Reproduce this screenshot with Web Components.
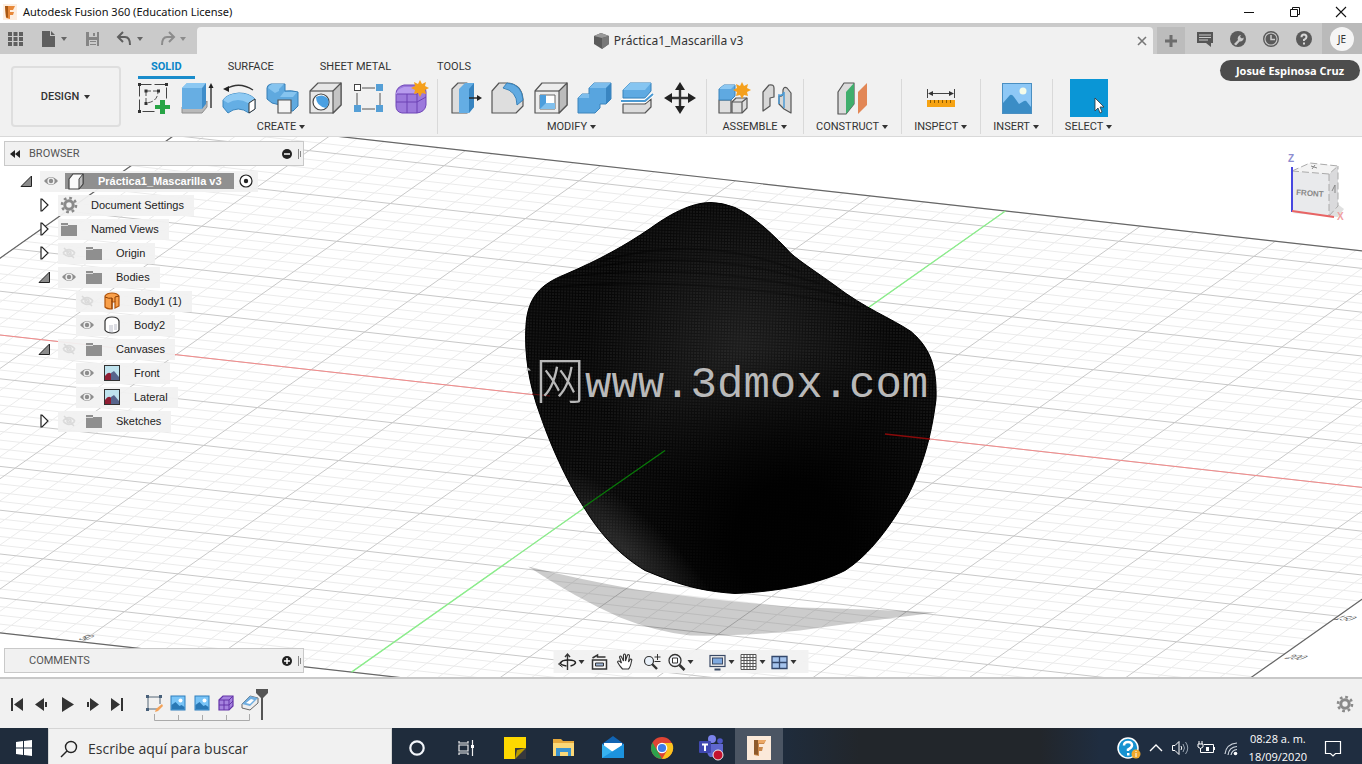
<!DOCTYPE html>
<html lang="es">
<head>
<meta charset="utf-8">
<title>Autodesk Fusion 360 (Education License)</title>
<style>
html, body {
	margin: 0;
	height: 100%;
}
body {
	font: 11px/14px Roboto, "Liberation Sans", sans-serif;
	color: #333;
	background: #fff;
	overflow: hidden;
}
</style>
</head>
<body>
<fx-app></fx-app>

<script>
// every icon is [box size, markup]
const box = 'stroke="#555" stroke-width="1.2" stroke-linejoin="round"';
const eye = '<path d="M1 8Q8 0 15 8Q8 16 1 8z" fill="#8d8d8d"/><circle cx="8" cy="8" r="3.6" fill="#f1f1f1"/><circle cx="8" cy="8" r="2.2" fill="#8d8d8d"/>';
const picture = '<rect x="1" y="1" width="14" height="14" fill="#79c4f7" stroke="#2f7fbd"/><path d="M1.500 10l4-3 4 4 2-1 3 2v2.500h-13z" fill="#2a78b5"/><circle cx="10.500" cy="5.500" r="2" fill="#fff"/>';
const gear = '<g fill="none" stroke="#8a8a8a"><circle cx="9" cy="9" r="4.200" stroke-width="3"/><circle cx="9" cy="9" r="7" stroke-width="2.600" stroke-dasharray="2.700 2.800"/></g>';
const fusion = '<rect width="24" height="24" fill="#fbe9d9"/><path d="M7 4h12l-2 4h-5v3h4l-1 4h-3v5l-5-1z" fill="#c9884c"/><path d="M7 4h4v15l-4-1z" fill="#8d5a2c"/><path d="M11 4h8l-2 3h-6z" fill="#eba765"/>';

const icons = {
	caret: [8, '<path d="M1 2h6L4 6z" fill="currentColor"/>'],
	logo: [16, '<rect x="1" y="0" width="14" height="16" fill="#fdeee0"/><path d="M3 2h10l-2 4H8v2h4l-1 3H8v4l-4-1z" fill="#e8893a"/><path d="M3 2h3v12l-2-1z" fill="#a85814"/>'],
	minimize: [16, '<path d="M3 8.500h10" stroke="#111"/>'],
	restore: [16, '<path d="M3.500 5.500h7v7h-7zM5.500 5.500v-2h7v7h-2" fill="none" stroke="#111"/>'],
	close: [16, '<path d="M3 3l10 10M13 3L3 13" stroke="#111" fill="none" stroke-width="1.100"/>'],
	apps: [16, '<path d="M0 1h4v4H0zM5.500 1h4v4h-4zM11 1h4v4h-4zM0 6h4v4H0zM5.500 6h4v4h-4zM11 6h4v4h-4zM0 11h4v4H0zM5.500 11h4v4h-4zM11 11h4v4h-4z" fill="#5f5f5f"/>'],
	file: [16, '<path d="M1 0h8v5h5v11H1z" fill="#5f5f5f"/><path d="M10 0l4 4h-4z" fill="#5f5f5f"/>'],
	save: [16, '<path d="M1 1h13v14H1z" fill="#858585"/><path d="M4 1h8v5H4zM4 9h8v6H4z" fill="#cacaca"/><path d="M8 2h2v3H8zM5 10h6v1H5zM5 13h6v1H5z" fill="#858585"/>'],
	undo: [16, '<path d="M6 1L1 6l5 5M2 6h6q5 0 5 8" fill="none" stroke="#5f5f5f" stroke-width="2"/>'],
	redo: [16, '<path d="M10 1l5 5-5 5M14 6H8q-5 0-5 8" fill="none" stroke="#8c8c8c" stroke-width="2"/>'],
	doc: [16, '<path d="M0 3l7-3 8 3v8l-7 5-8-5z" fill="#5b5b5b"/><path d="M0 3l7-3 8 3-7 2z" fill="#999"/><path d="M8 5l7-2v8l-7 5z" fill="#777"/>'],
	tabclose: [12, '<path d="M2 2l8 8M10 2l-8 8" stroke="#777" stroke-width="1.600"/>'],
	plus: [14, '<path d="M7 1v12M1 7h12" stroke="#6d6d6d" stroke-width="3"/>'],
	chat: [16, '<path d="M0 1h16v11h-2v4l-5-4H0z" fill="#555"/><path d="M2 4h12M2 6.500h12M2 9h9" stroke="#cacaca" stroke-width="1.200"/>'],
	wrench: [16, '<circle cx="8" cy="8" r="8" fill="#5a5a5a"/><path d="M4 13l4-4a3.500 3.500 0 0 1 3-5l-1 2 2 1.500 1.600-1a3.500 3.500 0 0 1-4 4L6 14.500z" fill="#cacaca"/>'],
	clock: [16, '<circle cx="8" cy="8" r="7.300" fill="none" stroke="#5a5a5a" stroke-width="1.400"/><circle cx="8" cy="8" r="5.500" fill="#5a5a5a"/><path d="M8 4v4.500h4" stroke="#cacaca" fill="none" stroke-width="1.500"/>'],
	help: [16, '<circle cx="8" cy="8" r="8" fill="#5a5a5a"/><path d="M5.500 6.200Q5.500 3.500 8 3.500t2.500 2.500Q10.500 7.500 8 8.800V10" stroke="#d8d8d8" stroke-width="2" fill="none"/><rect x="7" y="11.500" width="2" height="2" fill="#d8d8d8"/>'],

	// ribbon
	sketch: [36, '<path d="M4.500 4.500h27v14M4.500 4.500v27h16" fill="none" stroke="#444" stroke-dasharray="12 3"/><path d="M11 11h12M11 11v12Q23 22 23 11" fill="none" stroke="#555" stroke-dasharray="5 2"/><path d="M3 3h3v3H3zM30 3h3v3h-3zM3 30h3v3H3zM9.500 9.500h3v3h-3zM22 9.500h3v3h-3zM9.500 22h3v3h-3z" fill="#333"/><path d="M25 20h5v5h5v4h-5v5h-5v-5h-5v-4h5z" fill="#27a445"/>'],
	extrude: [36, '<path d="M4 27h20l5-6v6l-5 6H4z" fill="#b9b9b9" stroke="#8e8e8e"/><path d="M4 8l5-5h19l-4 5v21H4z" fill="#67aee3"/><path d="M4 8l5-5h19l-4 5z" fill="#8cc8f2"/><path d="M24 8l4-5v21l-4 5z" fill="#3f8dca"/><path d="M33 7v21" stroke="#222" stroke-width="1.300"/><path d="M33 3l2.500 5h-5z" fill="#222"/>'],
	revolve: [36, '<path d="M5 9q13-8 27 1" fill="none" stroke="#333" stroke-width="1.400"/><path d="M2 9l6-3v6z" fill="#222"/><path d="M2 20q4-6 16-7 10 0 16 6v10l-6 4q-11-8-21 0l-5-6z" fill="#64aee4" stroke="#3a85bd"/><path d="M2 20q4-6 16-7 10 0 16 6l-7 4q-10-6-20 0z" fill="#8fcaf3"/><path d="M28 23l6-4v10l-6 4z" fill="#fff" stroke="#333"/>'],
	sweep: [36, '<path d="M3 8q0-3 4-4h14v7q6-1 13 1v14l-5 5H17l-1-6-8-2-5-4z" fill="#5fa9df" stroke="#377fb6"/><path d="M4 8q1-3 4-4h12l-5 5v2l-4 2zM16 17l4-5h13l-4 5z" fill="#86c4ef"/><path d="M14 20h13v13H14z" fill="#f4f4f4" stroke="#555" stroke-width="1.200"/>'],
	hole: [36, `<path d="M3 11l8-8h23v22l-8 8H3z" fill="#e7e7e7" ${box}/><path d="M26 11l8-8v22l-8 8z" fill="#c4c4c4" ${box}/><path d="M3 11h23" ${box}/><circle cx="14" cy="22" r="8" fill="#fff" stroke="#444" stroke-width="1.200"/><path d="M9 17q0 9 10 11 4-4 2-9-5-6-12-2z" fill="#4aa0e2"/>`],
	pattern: [36, '<path d="M12 8h13M7 13v12M12 29h13M30 13v12" stroke="#555" stroke-dasharray="20"/><rect x="4.500" y="4.500" width="6" height="6" fill="#fff" stroke="#444"/><path d="M26 4h7v7h-7zM4 25h7v7H4zM26 25h7v7h-7z" fill="#559fd6"/>'],
	form: [36, '<path d="M3 14q0-7 8-9h14q8 0 8 7v13q-1 7-9 8H9q-6-1-6-7z" fill="#9c79dc" stroke="#6f46b8"/><path d="M3 14q1-5 8-7h18l-5 7z" fill="#b79bee"/><path d="M3 22h21l9-5M14 14v19M24 14v19M4 14h20l7-6" fill="none" stroke="#6c42b4"/><path d="M27 0l2 4 4-2-1 4 4 2-4 2 1 4-4-1-2 4-2-4-4 1 1-4-4-2 4-2-1-4 4 2z" fill="#f5a01c"/>'],
	presspull: [36, `<path d="M5 9l6-6h9v30H5z" fill="#ddd" ${box}/><path d="M12 9l6-6h9v24l-5 6H12z" fill="#64ade4"/><path d="M22 9l5-6v24l-5 6z" fill="#3784c0"/><path d="M22 18h11" stroke="#222" stroke-width="1.400"/><path d="M30 15l5 3-5 3z" fill="#222"/>`],
	fillet: [36, `<path d="M2 11l7-8h8q15 1 16 17v6l-7 7H2z" fill="#dedede" ${box}/><path d="M13 8l4-5q15 1 16 17l-6 5q0-14-14-17z" fill="#61aae1" stroke="#3782ba"/>`],
	shell: [36, `<path d="M2 11l7-8h25v22l-8 8H2z" fill="#ededed" ${box}/><path d="M26 11l8-8v22l-8 8z" fill="#bcbcbc" ${box}/><path d="M2 11h24" ${box}/><path d="M7 15h15v14H7z" fill="#fff" stroke="#666"/><path d="M7 15h6v8h9v6H7z" fill="#4c9edd"/><path d="M7 29l6-6h9v6z" fill="#81c0ed"/>`],
	combine: [36, '<path d="M2 18l4-4h7V8l5-5h17v16l-5 5h-6v4l-5 5H2z" fill="#58a5df" stroke="#3c84bb"/><path d="M13 8l5-5h17l-5 5zM2 18l4-4h7v4z" fill="#7dbdec"/><path d="M30 8l5-5v16l-5 5z" fill="#3985c1"/>'],
	split: [36, `<path d="M4 24h22l6-5v8l-6 6H4z" fill="#dcdcdc" ${box}/><path d="M4 10l7-7h21v8l-6 7H4z" fill="#5faae2" stroke="#3782bb"/><path d="M4 10l7-7h21l-6 7z" fill="#86c5f1"/><path d="M2 21h24l8-7" fill="none" stroke="#fff" stroke-width="4"/><path d="M2 21h24l8-7" fill="none" stroke="#4a99d2" stroke-width="2"/>`],
	move: [36, '<path d="M18 6v24M6 18h24" stroke="#333" stroke-width="2.400"/><path d="M18 2l5 8H13zM18 34l-5-8h10zM2 18l8-5v10zM34 18l-8 5V13z" fill="#222"/>'],
	component: [36, `<path d="M3 20h12v13H3z" fill="#dfdfdf" ${box}/><path d="M16 22l4-4h11v10l-5 5H16z" fill="#dedede" ${box}/><path d="M16 22h10l5-4M26 22v11" fill="none" ${box}/><path d="M3 9l5-4h11v11l-4 4H3z" fill="#5fa9e1" stroke="#3a83ba"/><path d="M3 9l5-4h11l-4 4z" fill="#8dc8f2"/><path d="M26 2l2 4 4-2-1 4 4 2-4 2 1 4-4-1-2 4-2-4-4 1 1-4-4-2 4-2-1-4 4 2z" fill="#f5a01c"/>`],
	joint: [36, `<path d="M4 12l6-7q5-1 5 3v9l-4 1v8l-7 5z" fill="#d7d7d7" ${box}/><path d="M24 10q1-4 4-2l4 5v20l-7-4-5-5v-8q3 1 4-2z" fill="#d7d7d7" ${box}/><path d="M20 24v-9q4 1 5-3v16" fill="none" stroke="#4d9cd6" stroke-width="1.500"/>`],
	plane: [36, `<path d="M3 12l6-9h10v21l-8 10H3z" fill="#dcdcdc" ${box}/><path d="M11 12l8-9v21l-8 10z" fill="#3fae6c"/><path d="M23 12l9-9v22l-9 9z" fill="#e28756"/>`],
	measure: [36, '<rect x="4" y="20" width="28" height="7" fill="#f6a313"/><path d="M7.500 20v3M11.500 20v3M15.500 20v3M19.500 20v3M23.500 20v3M27.500 20v3" stroke="#8c5a00"/><path d="M4.500 9v9M31.500 9v9M6 13.500h24" stroke="#444"/><path d="M5 13.500l5-2.500v5zM31 13.500l-5-2.500v5z" fill="#333"/>'],
	insert: [36, '<rect x="3.500" y="3.500" width="29" height="30" fill="#8ec8f6" stroke="#4a8fc2"/><circle cx="24" cy="11" r="3.500" fill="#f4fbe9"/><path d="M4 23l7-8q2-1 4 2l5 7 5-3q2-1 3 1l4 5v6H4z" fill="#3b8dc6"/>'],
	select: [38, '<rect width="38" height="38" fill="#0a96d6"/><path d="M25 19v13l3-3 2 5 2-1-2-5h4z" fill="#fff" stroke="#333" stroke-width=".8"/>'],

	// browser tree
	rewind: [12, '<path d="M6 2v8L1 6zM11 2v8L6 6z" fill="#222"/>'],
	minus: [12, '<circle cx="6" cy="6" r="5" fill="#222"/><path d="M3 6h6" stroke="#fff" stroke-width="1.500"/>'],
	add: [12, '<circle cx="6" cy="6" r="5" fill="#222"/><path d="M3 6h6M6 3v6" stroke="#fff" stroke-width="1.500"/>'],
	grip: [10, '<path d="M5.500 0v10M7.500 2v6" stroke="#888"/>'],
	open: [14, '<path d="M11.500 2v10.500H1z" fill="#8b8b8b" stroke="#222"/>'],
	closed: [14, '<path d="M3 1h1l6 6-6 6H3z" fill="#fff" stroke="#222" stroke-width="1.200"/>'],
	eye: [16, eye],
	noeye: [16, '<g stroke="#dadada" fill="none" stroke-width="1.500"><path d="M2 8Q8 1 14 8M2 8Q8 15 14 8M3 3l10 10"/><circle cx="8" cy="8" r="2"/></g>'],
	gear: [18, gear],
	folder: [18, '<path d="M1 3h7v2h9v11H1z" fill="#8f8f8f"/><path d="M1 5.500h7" stroke="#ddd"/>'],
	body: [18, '<path d="M2 7l4-5h10v10l-4 5H2z" fill="#fafafa" stroke="#444" stroke-width="1.200"/><path d="M12 7l4-5v10l-4 5z" fill="#bbb" stroke="#444"/>'],
	solid: [18, '<path d="M2 5q1-4 7-4t7 4v9q-2 3-7 3t-7-3z" fill="#fff" stroke="#333" stroke-width="1.200"/><path d="M6 9h4v7H6zM11 8h3v6h-3z" fill="#dcdde3"/>'],
	surface: [18, '<path d="M2 4q2-3 7-3t7 3v10l-4 2v-6H9v7q-5 0-7-2z" fill="#f9a04a" stroke="#b2540a" stroke-width="1.200"/><path d="M2 5q4 2 7 1v4M12 10V5l4-1M9 6v11" fill="none" stroke="#8c3f05"/>'],
	canvas: [18, '<rect x="1.500" y="1.500" width="15" height="15" fill="#bfe3ee" stroke="#333"/><path d="M2 12q4-6 7-1v5H2z" fill="#8f1d33"/><path d="M8 16V9l3-2 5 6v3z" fill="#56648c"/>'],
	target: [14, '<circle cx="7" cy="7" r="6" fill="#fff" stroke="#222" stroke-width="1.200"/><circle cx="7" cy="7" r="2.200" fill="#222"/>'],

	// navigation bar
	orbit: [18, '<path d="M9 1v16M6.500 4L9 1l2.500 3" fill="none" stroke="#333" stroke-width="1.400"/><path d="M8 13q-6-1-6-3 1-3 8-3t7 3q-1 2-5 3" fill="none" stroke="#222" stroke-width="1.500"/><path d="M4 8l-4 3 4 3" fill="none" stroke="#222"/>'],
	lookat: [18, '<path d="M2 7h14v9H2z" fill="#f6f6f6" stroke="#333" stroke-width="1.500"/><path d="M5 10h8v3H5z" fill="#9db4d5" stroke="#333"/><path d="M2 5l5-3v2h8" fill="none" stroke="#333" stroke-width="1.500"/>'],
	pan: [18, '<path d="M6 16Q3 13 1 9q1-2 3 0l1 1-2-6q1-2 2 0l2 4V2q1-2 2 0v6l2-6q2-1 2 1l-1 6 2-3q2 0 1 2-1 6-3 8z" fill="#fff" stroke="#333" stroke-width="1.100"/>'],
	zoom: [18, '<circle cx="6.500" cy="8" r="4.500" fill="#e9f1fa" stroke="#333" stroke-width="1.200"/><path d="M9.500 11l5 5" stroke="#333" stroke-width="2.400"/><path d="M15 1v6M12 4h6M12 8.500h6" stroke="#333"/>'],
	fit: [18, '<circle cx="7.500" cy="7.500" r="6" fill="#f4f6fa" stroke="#333" stroke-width="1.300"/><path d="M5 5h5v5H5z" fill="#fff" stroke="#333"/><path d="M12 12l5 5" stroke="#333" stroke-width="2.600"/>'],
	display: [18, '<rect x="1.500" y="2.500" width="15" height="11" fill="#eee" stroke="#3b4a66" stroke-width="1.200"/><rect x="4" y="5" width="10" height="6" fill="#7ea9e0" stroke="#3b4a66"/><path d="M6 16.500h6" stroke="#3b4a66" stroke-width="2"/>'],
	grid: [18, '<path d="M1.500 1.500h15v15h-15zM1.500 4.500h15M1.500 7.500h15M1.500 10.500h15M1.500 13.500h15M4.500 1.500v15M7.500 1.500v15M10.500 1.500v15M13.500 1.500v15" fill="#fff" stroke="#555"/>'],
	views: [18, '<path d="M1.500 3.500h15v12h-15zM9 3.500v12M1.500 9.500h15" fill="#a5c3ec" stroke="#33476b" stroke-width="1.300"/>'],

	// timeline
	first: [16, '<path d="M2 2h2v13H2zM14 2v13L5 8.500z" fill="#333"/>'],
	prev: [16, '<path d="M10 2v13L1 8.500zM11 6h2v5h-2z" fill="#333"/>'],
	play: [16, '<path d="M3 1l12 7.500L3 16z" fill="#333"/>'],
	next: [16, '<path d="M6 2v13l9-6.500zM3 6h2v5H3z" fill="#333"/>'],
	last: [16, '<path d="M12 2h2v13h-2zM2 2v13l9-6.500z" fill="#333"/>'],
	tsketch: [18, '<path d="M3 3h13M3 3v12h10M15 3v7" fill="none" stroke="#567"/><path d="M1 1h3v3H1zM14 1h3v3h-3zM1 14h3v3H1z" fill="#48607a"/><path d="M17 10l-6 5-1 3 3-1 5-5z" fill="#f4a258"/>'],
	tpicture: [16, picture],
	tform: [16, '<path d="M1 5l4-4h10v10l-4 4H1z" fill="#a583df" stroke="#6434a8" stroke-width="1.200"/><path d="M1 5h10l4-4M11 5v10M6 5v10M1 10h10l4-4" fill="none" stroke="#6434a8"/>'],
	tbody: [18, '<path d="M1 10l8-8 8 2v5l-8 7-8-2z" fill="#eee" stroke="#666"/><path d="M1 10l8-8 8 2-8 8z" fill="#70aee0"/><path d="M5 9l5-4 3 1-4 4z" fill="#fff"/>'],

	// taskbar
	windows: [16, '<path d="M0 2l7-1v6.500H0zM8 .9L16 0v7.500H8zM0 8.500h7V15l-7-1zM8 8.500h8V16l-8-.900z" fill="#fff"/>'],
	search: [18, '<circle cx="11" cy="7" r="5.500" fill="none" stroke="#222" stroke-width="1.400"/><path d="M7 11l-6 6" stroke="#222" stroke-width="1.500"/>'],
	cortana: [16, '<circle cx="8" cy="8" r="6.700" fill="none" stroke="#f2f6fb" stroke-width="2.200"/>'],
	tasks: [18, '<path d="M2 2v2h9V2M2 6h9v6H2zM2 16v-2h9v2M15.500 1v16" fill="none" stroke="#eee" stroke-width="1.200"/><path d="M14 6h3v3h-3z" fill="#fff"/>'],
	notes: [24, '<path d="M1 1h22v12L13 23H1z" fill="#fdd800"/><path d="M12 23V12h11v11z" fill="#37383d"/><path d="M12 23l2-9 9-2z" fill="#b69a00"/>'],
	explorer: [24, '<path d="M1 3h8l2 2h11v15H1z" fill="#e6a93c"/><path d="M1 7h21v13H1z" fill="#fbd877"/><path d="M4 20v-8h15v8h-3v-4H8v4z" fill="#3a93cf"/>'],
	mail: [24, '<path d="M1 8l11-8 11 8v14H1z" fill="#1164b3"/><path d="M3 7h18v10H3z" fill="#fff"/><path d="M1 8l11 8 11-8v14H1z" fill="#37b2ef"/><path d="M1 22L23 8v14z" fill="#1c93dd"/>'],
	chrome: [24, '<circle cx="12" cy="12" r="11" fill="#e04434"/><path d="M2.500 6.500L8 16l4 7A11 11 0 0 1 2.500 6.500z" fill="#2da24c"/><path d="M12 7h10a11 11 0 0 1-10 16l5-8.500z" fill="#fbc31e"/><circle cx="12" cy="12" r="5.300" fill="#fff"/><circle cx="12" cy="12" r="4.100" fill="#3f7de8"/>'],
	teams: [26, '<circle cx="14" cy="4" r="4" fill="#7b83eb"/><circle cx="22" cy="6" r="2.800" fill="#5059c9"/><path d="M9 9h16v7q0 6-5 6h-8q-3-2-3-7z" fill="#5f67cf"/><rect x="1" y="6" width="12" height="12" rx="1" fill="#4048b0"/><path d="M4 9.500h6M7 9.500v6.500" stroke="#fff" stroke-width="2"/><circle cx="20" cy="20" r="5" fill="#c4122f" stroke="#eee"/>'],
	fusion: [24, fusion],
	assist: [24, '<circle cx="11" cy="12" r="10" fill="#1692d0" stroke="#fff" stroke-width="1.500"/><path d="M7 9.500Q7 6 11 6t4 3.500q0 2-4 4V15" stroke="#fff" stroke-width="2.500" fill="none"/><rect x="10" y="17" width="2.500" height="2.500" fill="#fff"/><circle cx="19" cy="18" r="4.500" fill="#f3a92c"/><path d="M19 15v6" stroke="#fff" stroke-dasharray="1 1 4"/>'],
	chevron: [14, '<path d="M1 10l6-6 6 6" fill="none" stroke="#fff" stroke-width="1.400"/>'],
	volume: [18, '<path d="M1.500 6.500H4l4-4v13l-4-4H1.500z" fill="none" stroke="#fff"/><path d="M10 7q1.500 2 0 4" fill="none" stroke="#fff"/><path d="M12 5q3 4 0 8M14.500 3q4.500 6 0 12" fill="none" stroke="#9aa5b2"/>'],
	battery: [18, '<path d="M7 5.500h9.500v8H6M17.500 8v3" fill="none" stroke="#fff"/><path d="M9 8h3v4H9z" fill="#fff"/><path d="M2 2v3M5 2v3M1 5h5v3q-2.500 3-5 0zM3.500 9v4.500h3" fill="none" stroke="#fff"/>'],
	wifi: [16, '<g fill="none" stroke="#cfd6de" stroke-width="1.200"><path d="M2 14Q3 4 14 3M5 15Q6 7 14 6.500M8 15q1-5 6-5.500"/></g><circle cx="12.500" cy="13.500" r="1.800" fill="#fff"/>'],
	notify: [18, '<path d="M1.500 2.500h15v12h-5L9 17l-2.500-2.500h-5z" fill="none" stroke="#fff" stroke-width="1.200"/>']
};

class FxElement extends HTMLElement {

	connectedCallback () {
		this.attachShadow({ mode: 'open' });
		this.shadowRoot.innerHTML = `<style>${this.constructor.style}</style>${this.render()}`;
	}

}

function getIcon (name) {
	return `<fx-icon name="${name}"></fx-icon>`;
}

const buttonStyle = `
button {
	display: flex;
	align-items: center;
	justify-content: center;
	margin: 0;
	padding: 0;
	border: 0;
	background: none;
	font: inherit;
	color: inherit;
}
`;


class FxIcon extends FxElement {

	static style = `
	:host { display: inline-block; flex: none; line-height: 0; }
	svg { display: block; overflow: visible; }
	`;

	render () {
		const [size, markup] = icons[this.getAttribute('name')];
		return `<svg width="${size}" height="${size}" viewBox="0 0 ${size} ${size}" aria-hidden="true">${markup}</svg>`;
	}

}


class FxTitlebar extends FxElement {

	static style = `${buttonStyle}
	:host {
		display: flex;
		align-items: center;
		height: 23px;
		padding-left: 2px;
		background: #fff;
		color: #111;
		font: 11px/16px "Noto Sans", "Open Sans", sans-serif;
	}
	.name { flex: 1; margin-left: 5px; }
	button { width: 46px; height: 20px; }
	.controls { display: flex; margin-right: -2px; }
	`;

	render () {
		return `${getIcon('logo')}<span class="name"><slot></slot></span>
		<div class="controls">
			<button aria-label="Minimizar">${getIcon('minimize')}</button>
			<button aria-label="Restaurar">${getIcon('restore')}</button>
			<button aria-label="Cerrar">${getIcon('close')}</button>
		</div>`;
	}

}


class FxTabbar extends FxElement {

	static style = `${buttonStyle}
	:host {
		display: flex;
		position: relative;
		height: 31px;
		background: #cacaca;
	}
	.quick {
		display: flex;
		align-items: center;
		box-sizing: border-box;
		width: 197px;
		padding: 0 7px 0 8px;
	}
	.quick > * { color: #666; }
	.quick .caret { width: 18px; height: 16px; margin-right: 12px; }
	.quick .caret.end { margin: 0; color: #8c8c8c; }
	.quick .app { margin-right: 17px; }
	.quick .save { margin: 0 16px 0 1px; }
	.tab {
		display: flex;
		flex: 1;
		align-items: center;
		margin-top: 4px;
		border-radius: 4px 4px 0 0;
		background: #f1f1f1;
		font: 12px/16px "Noto Sans", "Open Sans", sans-serif;
	}
	.tab .doc {
		display: flex;
		flex: 1;
		justify-content: center;
		gap: 4px;
		padding-left: 4px;
	}
	.tab button { margin-right: 5px; }
	.new {
		width: 28px;
		margin: 4px 4px 0;
		background: #bcbcbc;
	}
	.help { display: flex; align-items: center; gap: 17px; padding: 0 10px 0 8px; }
	.account {
		width: 40px;
		background: #bababa;
	}
	.account span {
		width: 24px;
		border-radius: 12px;
		background: #f5f5f5;
		font: 10px/24px "Noto Sans", sans-serif;
		text-align: center;
	}
	.tip {
		position: absolute;
		top: 37px;
		right: 2px;
		padding: 0 16px;
		border-radius: 11px;
		background: #4d4d4d;
		color: #fff;
		font: bold 11px/21px "Open Sans", sans-serif;
	}
	`;

	render () {
		return `<div class="quick">
			<button class="app" aria-label="Data panel">${getIcon('apps')}</button>
			<button aria-label="File">${getIcon('file')}</button>
			<button class="caret" aria-label="File menu">${getIcon('caret')}</button>
			<button class="save" aria-label="Save">${getIcon('save')}</button>
			<button aria-label="Undo">${getIcon('undo')}</button>
			<button class="caret" aria-label="Undo list">${getIcon('caret')}</button>
			<button aria-label="Redo">${getIcon('redo')}</button>
			<button class="caret end" aria-label="Redo list">${getIcon('caret')}</button>
		</div>
		<div class="tab">
			<div class="doc">${getIcon('doc')}<span>Práctica1_Mascarilla v3</span></div>
			<button aria-label="Close tab">${getIcon('tabclose')}</button>
		</div>
		<button class="new" aria-label="New tab">${getIcon('plus')}</button>
		<div class="help">
			<button aria-label="Comments">${getIcon('chat')}</button>
			<button aria-label="Extensions">${getIcon('wrench')}</button>
			<button aria-label="Job status">${getIcon('clock')}</button>
			<button aria-label="Help">${getIcon('help')}</button>
		</div>
		<button class="account"><span>JE</span></button>
		<div class="tip" role="tooltip">Josué Espinosa Cruz</div>`;
	}

}


// one labelled set of tools, e.g. <fx-group label="CREATE" tools="sketch extrude">
class FxGroup extends FxElement {

	static style = `${buttonStyle}
	:host {
		display: flex;
		flex-direction: column;
		align-items: center;
		gap: 3px;
		padding: 0 5px;
		border-right: 1px solid #d9d9d9;
	}
	:host([single]) { padding: 0 12px; }
	:host([last]) { border: 0; }
	.tools { display: flex; }
	.tools button { width: 43px; height: 38px; }
	.label { gap: 2px; height: 14px; }
	`;

	render () {
		const tools = this.getAttribute('tools').split(' ')
			.map(tool => `<button aria-label="${tool}">${getIcon(tool)}</button>`).join('');
		return `<div class="tools">${tools}</div>
		<button class="label">${this.getAttribute('label')}${getIcon('caret')}</button>`;
	}

}


class FxRibbon extends FxElement {

	static style = `${buttonStyle}
	:host {
		display: flex;
		height: 82px;
		border-bottom: 1px solid #d9d9d9;
		background: #f1f1f1;
	}
	.workspace {
		box-sizing: border-box;
		width: 110px;
		height: 61px;
		margin: 12px 5px 0 11px;
		gap: 4px;
		border: 2px solid #dedede;
		border-radius: 4px;
		font-weight: 500;
	}
	.tabs {
		display: flex;
		gap: 20px;
		padding-left: 12px;
	}
	.tabs button {
		box-sizing: border-box;
		height: 25px;
		padding: 3px 13px 0;
		border-bottom: 3px solid transparent;
	}
	.tabs button.active {
		border-color: #1a8ccb;
		color: #0b86c8;
		font-weight: bold;
	}
	.groups { display: flex; }
	`;

	render () {
		return `<button class="workspace">DESIGN${getIcon('caret')}</button>
		<div>
			<div class="tabs">
				<button class="active">SOLID</button>
				<button>SURFACE</button>
				<button>SHEET METAL</button>
				<button>TOOLS</button>
			</div>
			<div class="groups">
				<fx-group label="CREATE" tools="sketch extrude revolve sweep hole pattern form"></fx-group>
				<fx-group label="MODIFY" tools="presspull fillet shell combine split move"></fx-group>
				<fx-group label="ASSEMBLE" tools="component joint"></fx-group>
				<fx-group single label="CONSTRUCT" tools="plane"></fx-group>
				<fx-group single label="INSPECT" tools="measure"></fx-group>
				<fx-group single label="INSERT" tools="insert"></fx-group>
				<fx-group single last label="SELECT" tools="select"></fx-group>
			</div>
		</div>`;
	}

}


// ground plane: ACROSS runs along the red axis, DOWN along the green one
const ORIGIN = [716, 415.6];
const ACROSS = [135, 15.1];
const DOWN = [-53.6, 37.8];
const EDGE = { left: -6, right: 5.8, back: -5.4, front: 6.8 };

function project (i, j) {
	return [0, 1].map(k => (ORIGIN[k] + i * ACROSS[k] + j * DOWN[k]).toFixed(1)).join(' ');
}

function getLine (i1, j1, i2, j2) {
	return `M${project(i1, j1)}L${project(i2, j2)}`;
}

function getGrid () {
	let minor = '';
	let major = '';
	for (let n = EDGE.left * 5; n <= EDGE.right * 5; n++) {
		const line = getLine(n / 5, EDGE.back, n / 5, EDGE.front);
		if (n % 5) minor += line;
		else major += line;
	}
	for (let n = EDGE.back * 5; n <= EDGE.front * 5; n++) {
		const line = getLine(EDGE.left, n / 5, EDGE.right, n / 5);
		if (n % 5) minor += line;
		else major += line;
	}
	const { left, right, back, front } = EDGE;
	return `<path d="${minor}" stroke="#ebebeb"/>
	<path d="${major}" stroke="#c8c8c8"/>
	<path d="M${project(left, back)}L${project(right, back)}L${project(right, front)}L${project(left, front)}z" stroke="#666" stroke-width="1.200"/>
	<path d="${getLine(left, 0, right, 0)}" stroke="#f58a8a"/>
	<path d="${getLine(0, back, 0, front)}" stroke="#8aee8a" stroke-width="1.300"/>`;
}

class FxScene extends FxElement {

	static style = `
	:host { display: block; background: #fff; }
	svg { display: block; width: 100%; height: 100%; }
	.mark { font: 44px "Liberation Mono", monospace; fill: #b9b9b9; }
	.han { font: 300 50px "Noto Sans CJK SC", sans-serif; }
	.tick { font: italic 10px "Liberation Sans", sans-serif; fill: #555; }
	`;

	render () {
		const mask = 'M711 203C690 203 668 216 650 229C625 246 600 260 565 275C540 285 528 298 526 325C524 355 529 385 540 415C553 453 570 487 584 508C602 538 622 557 645 571C668 580 690 591 735 594C780 592 820 584 845 571C870 555 891 526 908 496C922 468 931 440 936 400C937 370 932 350 911 332C890 318 865 309 835 286C820 275 800 262 791 254C775 237 755 217 735 208Q722 203 711 203z';
		return `<svg viewBox="0 137 1362 541" preserveAspectRatio="xMidYMid slice">
			<defs>
				<pattern id="mesh" width="3" height="3" patternUnits="userSpaceOnUse" patternTransform="rotate(2)">
					<rect x="1" y="1" width="2" height="2" fill="#2c2c2c"/>
				</pattern>
				<radialGradient id="shine" gradientUnits="userSpaceOnUse" cx="740" cy="345" r="150">
					<stop offset="0" stop-color="#888" stop-opacity=".16"/>
					<stop offset="1" stop-color="#888" stop-opacity="0"/>
				</radialGradient>
				<radialGradient id="rim" gradientUnits="userSpaceOnUse" cx="0" cy="0" r="1" gradientTransform="translate(625 550) rotate(42) scale(130 38)">
					<stop offset="0" stop-color="#777" stop-opacity=".3"/>
					<stop offset="1" stop-color="#777" stop-opacity="0"/>
				</radialGradient>
				<radialGradient id="dark" gradientUnits="userSpaceOnUse" cx="790" cy="540" r="190">
					<stop offset=".3" stop-color="#000" stop-opacity=".9"/>
					<stop offset="1" stop-color="#000" stop-opacity="0"/>
				</radialGradient>
				<clipPath id="shape"><path d="${mask}"/></clipPath>
			</defs>
			<g fill="none">${getGrid()}</g>
			<path d="M528 567Q580 580 636 590Q720 602 800 608Q880 610 937 613Q870 621 800 631Q740 637 690 636Q655 632 620 618Q575 598 528 567z" fill="#000" opacity=".2"/>
			<path d="${mask}" fill="#080808"/>
			<g clip-path="url(#shape)">
				<path d="${mask}" fill="url(#mesh)"/>
				<path d="${mask}" fill="#050505" opacity=".58"/>
				<g fill="none" stroke="#000" stroke-width="2" opacity=".4">
					<path d="M600 262Q700 232 800 272M580 270Q700 246 820 284M560 278Q700 260 840 296M550 288Q700 274 860 308"/>
				</g>
				<path d="${mask}" fill="url(#shine)"/>
				<path d="${mask}" fill="url(#dark)"/>
				<path d="${mask}" fill="url(#rim)"/>
			</g>
			<path d="${mask}" fill="none" stroke="#000"/>
			<path d="M583 508L665 451" stroke="#087a08" stroke-width="1.300"/>
			<path d="M885 434.500L930 439.500" stroke="#8a0a0a" stroke-width="1.300"/>
			<path d="M532 394.500L550 396.500" stroke="#5a0a0a"/>
			<path d="M526 371L531 371L528 368z" fill="#b9b9b9"/>
			<text class="mark" x="585" y="397">www.3dmox.com</text>
			<text class="mark han" x="535" y="399">网</text>
			<text class="tick" transform="matrix(1 .1 -1.200 .6 1333 620)">150</text>
			<text class="tick" transform="matrix(1 .1 -1.200 .6 1284 659)">200</text>
			<text class="tick" transform="matrix(.8 .1 -1.200 .7 78 640)">50</text>
		</svg>`;
	}

}


class FxCube extends FxElement {

	static style = `
	:host { display: block; }
	svg { display: block; }
	text { font: bold 10px "Liberation Sans", sans-serif; }
	`;

	render () {
		return `<svg width="64" height="74" viewBox="0 0 64 74">
			<path d="M8 62l46 4 6-8-8-6z" fill="#ccc" opacity=".6"/>
			<path d="M8 20l18-8 28 3-9 8z" fill="#f3f3f3"/>
			<path d="M8 20l37 3v42L8 60z" fill="#e9eaec"/>
			<path d="M45 23l9-8v40l-9 10z" fill="#dadadc"/>
			<path d="M8 20l18-8 28 3-9 8zM45 23v42M45 65l9-10V15" fill="none" stroke="#aaa" stroke-dasharray="7 3"/>
			<path d="M27 15l6 2M31 14l-3 4M48 40l3-6v8" fill="none" stroke="#888"/>
			<path d="M8 61V16" stroke="#4747e0" stroke-width="2"/>
			<path d="M8 60l42 6" stroke="#e86464" stroke-width="2"/>
			<text x="4" y="11" fill="#8d8dd0">Z</text>
			<text x="53" y="69" fill="#f0a0a0">X</text>
			<text x="12" y="44" fill="#888" style="font-size: 8px" transform="rotate(4 12 44)">FRONT</text>
		</svg>`;
	}

}


class FxPanel extends FxElement {

	static style = `${buttonStyle}
	:host {
		display: flex;
		align-items: center;
		box-sizing: border-box;
		width: 300px;
		height: 25px;
		padding-left: 4px;
		border: 1px solid #c9c9c9;
		background: #f1f1f1;
		color: #555;
	}
	.collapse { width: 12px; height: 12px; margin-right: 8px; }
	.name { flex: 1; }
	`;

	render () {
		const collapse = this.hasAttribute('open') ? getIcon('rewind') : '';
		return `<button class="collapse" aria-label="Collapse">${collapse}</button>
		<span class="name"><slot></slot></span>
		<button aria-label="Options">${getIcon(this.hasAttribute('open') ? 'minus' : 'add')}</button>
		${getIcon('grip')}`;
	}

}


class FxNode extends FxElement {

	static style = `${buttonStyle}
	:host {
		display: flex;
		align-items: center;
		height: 24px;
		padding-left: 18px;
		font: 11px/20px "Liberation Sans", sans-serif;
		color: #222;
	}
	:host([depth="1"]) { padding-left: 36px; }
	:host([depth="2"]) { padding-left: 54px; }
	.toggle { width: 18px; margin-right: 4px; }
	.chip {
		display: flex;
		align-items: center;
		height: 21px;
		background: rgba(241, 241, 241, .94);
	}
	.eye { width: 22px; margin-right: 3px; }
	.item { display: flex; align-items: center; height: 16px; padding-right: 10px; }
	.item fx-icon {
		display: flex;
		justify-content: center;
		width: 22px;
		margin-right: 11px;
	}
	:host([root]) .item {
		padding-right: 12px;
		background: #909090;
		color: #fff;
		font-weight: bold;
	}
	.target { width: 24px; }
	`;

	render () {
		const toggle = this.getAttribute('toggle');
		const eyeName = this.getAttribute('eye');
		return `<button class="toggle" aria-label="Toggle">${toggle ? getIcon(toggle) : ''}</button>
		<div class="chip">
			${eyeName ? `<button class="eye" aria-label="Visibility">${getIcon(eyeName)}</button>` : ''}
			<div class="item">${getIcon(this.getAttribute('icon'))}<slot></slot></div>
			${this.hasAttribute('root') ? `<button class="target" aria-label="Activate">${getIcon('target')}</button>` : ''}
		</div>`;
	}

}


class FxNavbar extends FxElement {

	static style = `${buttonStyle}
	:host {
		display: flex;
		align-items: center;
		height: 23px;
		padding: 0 10px 0 2px;
		background: rgba(241, 241, 241, .95);
		color: #333;
	}
	button { height: 23px; padding: 0 4px; }
	button.menu { padding: 0 1px 0 3px; gap: 1px; }
	.gap { width: 10px; }
	`;

	render () {
		const caret = getIcon('caret');
		return `<button class="menu" aria-label="Orbit">${getIcon('orbit')}${caret}</button>
		<button aria-label="Look at">${getIcon('lookat')}</button>
		<button aria-label="Pan">${getIcon('pan')}</button>
		<button aria-label="Zoom">${getIcon('zoom')}</button>
		<button class="menu" aria-label="Fit">${getIcon('fit')}${caret}</button>
		<span class="gap"></span>
		<button class="menu" aria-label="Display">${getIcon('display')}${caret}</button>
		<button class="menu" aria-label="Grid">${getIcon('grid')}${caret}</button>
		<button class="menu" aria-label="Viewports">${getIcon('views')}${caret}</button>`;
	}

}


class FxWorkarea extends FxElement {

	static style = `
	:host {
		display: flex;
		position: relative;
		flex-direction: column;
		justify-content: space-between;
		min-height: 0;
		overflow: hidden;
	}
	fx-scene { position: absolute; inset: 0; }
	fx-cube { position: absolute; top: 14px; right: 14px; }
	fx-navbar {
		position: absolute;
		bottom: 4px;
		left: 50%;
		transform: translateX(-50%);
	}
	.browser, .comments { position: relative; }
	.browser { padding-top: 4px; }
	.comments { padding-bottom: 4px; }
	fx-panel { margin-left: 4px; }
	.tree { padding-top: 3px; }
	`;

	render () {
		return `<fx-scene></fx-scene>
		<fx-cube></fx-cube>
		<div class="browser">
			<fx-panel open>BROWSER</fx-panel>
			<div class="tree">
				<fx-node root toggle="open" eye="eye" icon="body">Práctica1_Mascarilla v3</fx-node>
				<fx-node depth="1" toggle="closed" icon="gear">Document Settings</fx-node>
				<fx-node depth="1" toggle="closed" icon="folder">Named Views</fx-node>
				<fx-node depth="1" toggle="closed" eye="noeye" icon="folder">Origin</fx-node>
				<fx-node depth="1" toggle="open" eye="eye" icon="folder">Bodies</fx-node>
				<fx-node depth="2" eye="noeye" icon="surface">Body1 (1)</fx-node>
				<fx-node depth="2" eye="eye" icon="solid">Body2</fx-node>
				<fx-node depth="1" toggle="open" eye="noeye" icon="folder">Canvases</fx-node>
				<fx-node depth="2" eye="eye" icon="canvas">Front</fx-node>
				<fx-node depth="2" eye="eye" icon="canvas">Lateral</fx-node>
				<fx-node depth="1" toggle="closed" eye="noeye" icon="folder">Sketches</fx-node>
			</div>
		</div>
		<div class="comments"><fx-panel>COMMENTS</fx-panel></div>
		<fx-navbar></fx-navbar>`;
	}

}


class FxTimeline extends FxElement {

	static style = `${buttonStyle}
	:host {
		display: flex;
		box-sizing: border-box;
		height: 51px;
		padding: 9px 8px 0;
		border-top: 2px solid #c8c8c8;
		background: #f1f1f1;
	}
	.player, .steps { display: flex; }
	.player { gap: 9px; height: 32px; padding: 0 17px 0 1px; }
	.steps { position: relative; height: 30px; }
	.steps button { width: 24px; height: 30px; }
	.track { position: absolute; left: 12px; top: 24px; }
	.marker { margin-left: -7px; }
	.settings { height: 32px; margin-left: auto; }
	`;

	render () {
		const player = ['first', 'prev', 'play', 'next', 'last']
			.map(name => `<button aria-label="${name}">${getIcon(name)}</button>`).join('');
		const steps = ['tsketch', 'tpicture', 'tpicture', 'tform', 'tbody']
			.map(name => `<button aria-label="${name}">${getIcon(name)}</button>`).join('');
		return `<div class="player">${player}</div>
		<div class="steps">
			${steps}
			<svg class="track" width="97" height="9"><path d="M.5 2v6.500h95V2M24.500 3v5M48.500 3v5M72.500 3v5" fill="none" stroke="#aaa"/></svg>
			<svg class="marker" width="14" height="34"><path d="M1 1h12v4L8 10v22H6V10L1 5z" fill="#555"/></svg>
		</div>
		<button class="settings" aria-label="Settings">${getIcon('gear')}</button>`;
	}

}


class FxTaskbar extends FxElement {

	static style = `${buttonStyle}
	:host {
		display: flex;
		height: 36px;
		background: linear-gradient(90deg, #1f2c3c 0 784px, #22262b 860px 1040px, #1f2d40 1100px);
		color: #fff;
		font: 11px/18px "Open Sans", sans-serif;
	}
	button { padding-top: 4px; }
	.start { width: 48px; }
	.search {
		display: flex;
		align-items: center;
		box-sizing: border-box;
		width: 344px;
		padding: 4px 0 0 11px;
		gap: 10px;
		border: 1px solid #d5d5d5;
		border-bottom: 0;
		background: #f1f1f1;
	}
	input {
		flex: 1;
		min-width: 0;
		padding: 0;
		border: 0;
		outline: 0;
		background: none;
		font: 14px/20px "Open Sans", sans-serif;
	}
	input::placeholder { color: #333; opacity: 1; }
	.apps { display: flex; flex: 1; }
	.apps button { width: 49px; }
	.apps .active { width: 48px; background: #4b5563; }
	.tray { display: flex; align-items: center; gap: 8px; }
	.clock { display: block; margin-left: 2px; text-align: center; white-space: nowrap; }
	.notify { width: 36px; margin-right: 11px; }
	`;

	render () {
		const apps = ['cortana', 'tasks', 'notes', 'explorer', 'mail', 'chrome', 'teams']
			.map(name => `<button aria-label="${name}">${getIcon(name)}</button>`).join('');
		const tray = ['assist', 'chevron', 'volume', 'battery', 'wifi']
			.map(name => `<button aria-label="${name}">${getIcon(name)}</button>`).join('');
		return `<button class="start" aria-label="Inicio">${getIcon('windows')}</button>
		<label class="search">${getIcon('search')}<input type="text" placeholder="Escribe aquí para buscar" aria-label="Buscar"></label>
		<div class="apps">${apps}<button class="active" aria-label="fusion">${getIcon('fusion')}</button></div>
		<div class="tray">
			${tray}
			<button class="clock">08:28 a. m.<br>18/09/2020</button>
			<button class="notify" aria-label="Notificaciones">${getIcon('notify')}</button>
		</div>`;
	}

}


class FxApp extends FxElement {

	static style = `
	:host {
		display: flex;
		flex-direction: column;
		height: 100vh;
	}
	fx-tabbar { z-index: 1; }
	fx-workarea { flex: 1; }
	`;

	render () {
		return `<fx-titlebar>Autodesk Fusion 360 (Education License)</fx-titlebar>
		<fx-tabbar></fx-tabbar>
		<fx-ribbon></fx-ribbon>
		<fx-workarea></fx-workarea>
		<fx-timeline></fx-timeline>
		<fx-taskbar></fx-taskbar>`;
	}

}

customElements.define('fx-icon', FxIcon);
customElements.define('fx-titlebar', FxTitlebar);
customElements.define('fx-tabbar', FxTabbar);
customElements.define('fx-group', FxGroup);
customElements.define('fx-ribbon', FxRibbon);
customElements.define('fx-scene', FxScene);
customElements.define('fx-cube', FxCube);
customElements.define('fx-panel', FxPanel);
customElements.define('fx-node', FxNode);
customElements.define('fx-navbar', FxNavbar);
customElements.define('fx-workarea', FxWorkarea);
customElements.define('fx-timeline', FxTimeline);
customElements.define('fx-taskbar', FxTaskbar);
customElements.define('fx-app', FxApp);
</script>
</body>
</html>
